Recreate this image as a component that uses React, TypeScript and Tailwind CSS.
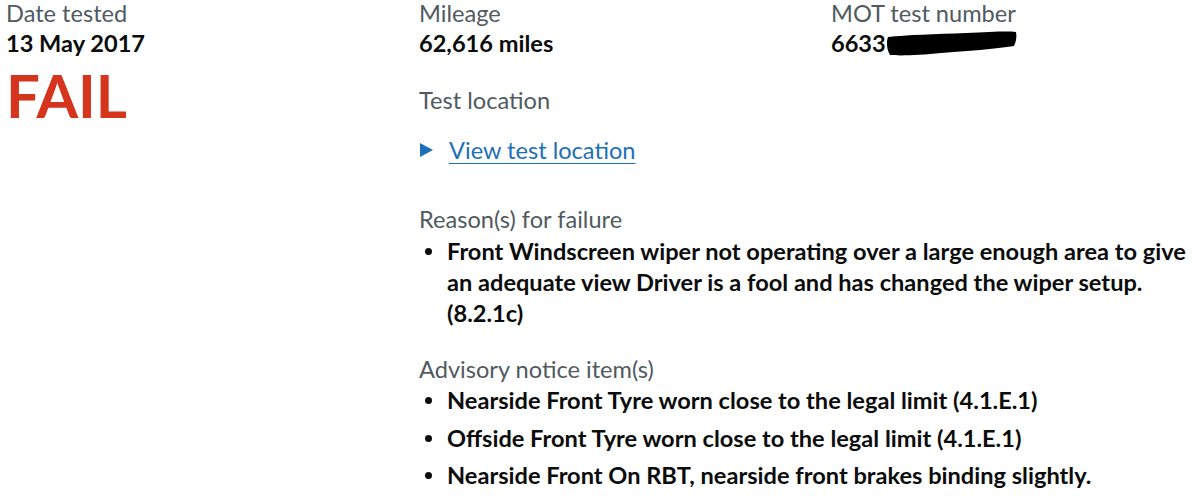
function Label({ children, className = '' }: { children: React.ReactNode; className?: string }) {
  return <div className={`text-[23.6px] leading-[26px] text-[#505a5f] ${className}`}>{children}</div>;
}

function Value({ children, className = '' }: { children: React.ReactNode; className?: string }) {
  return <div className={`mt-1 text-[23.6px] leading-[26px] font-bold text-[#0b0c0c] ${className}`}>{children}</div>;
}

function Bullet() {
  return (
    <span className="w-[28px] shrink-0 pt-[12px] pl-[6px]">
      <span className="block w-[7px] h-[7px] rounded-full bg-[#0b0c0c]" />
    </span>
  );
}

export default function App() {
  return (
    <div className="bg-white w-[1194px] h-[499px] overflow-hidden font-['Lato',sans-serif] text-[#0b0c0c]">
      <div className="flex pl-[6px]">
        <div className="w-[413px] shrink-0">
          <Label>Date tested</Label>
          <Value>13 May 2017</Value>
          <div className="mt-[10px] text-[60px] leading-[58px] font-bold text-[#d4351c]">FAIL</div>
        </div>
        <div className="flex-1">
          <div className="grid grid-cols-[412px_1fr]">
            <div>
              <Label>Mileage</Label>
              <Value>62,616 miles</Value>
            </div>
            <div>
              <Label>MOT test number</Label>
              <Value>
                <span className="inline-flex items-start">
                  6633
                  <svg width="132" height="26" viewBox="0 0 132 26" className="block">
                    <path
                      d="M2 7 C 20 5, 50 4, 80 3 C 105 2, 120 1, 130 2 C 131 7, 130 12, 128 16 C 110 19, 80 21, 55 23 C 35 25, 15 26, 4 25 C 1 20, 0 12, 2 7 Z"
                      fill="#000"
                    />
                  </svg>
                </span>
              </Value>
            </div>
          </div>
          <Label className="mt-[31px]">Test location</Label>
          <div className="mt-[24px] flex items-center text-[23.6px] leading-[26px]">
            <svg width="14" height="14" viewBox="0 0 14 14" className="shrink-0">
              <path d="M1 0 L14 7 L1 14 Z" fill="#1d70b8" />
            </svg>
            <a href="#" className="ml-[16px] text-[#1d70b8] underline decoration-1 underline-offset-[4px]">
              View test location
            </a>
          </div>
          <Label className="mt-[43px]">Reason(s) for failure</Label>
          <ul className="mt-[4px] text-[23.6px] leading-[31px] font-bold">
            <li className="flex">
              <Bullet />
              <span>
                Front Windscreen wiper not operating over a large enough area to give
                <br />
                an adequate view Driver is a fool and has changed the wiper setup.
                <br />
                (8.2.1c)
              </span>
            </li>
          </ul>
          <Label className="mt-[27px]">Advisory notice item(s)</Label>
          <ul className="mt-[3px] flex flex-col gap-[6.5px] text-[23.6px] leading-[31px] font-bold">
            <li className="flex">
              <Bullet />
              <span>Nearside Front Tyre worn close to the legal limit (4.1.E.1)</span>
            </li>
            <li className="flex">
              <Bullet />
              <span>Offside Front Tyre worn close to the legal limit (4.1.E.1)</span>
            </li>
            <li className="flex">
              <Bullet />
              <span>Nearside Front On RBT, nearside front brakes binding slightly.</span>
            </li>
          </ul>
        </div>
      </div>
    </div>
  );
}
